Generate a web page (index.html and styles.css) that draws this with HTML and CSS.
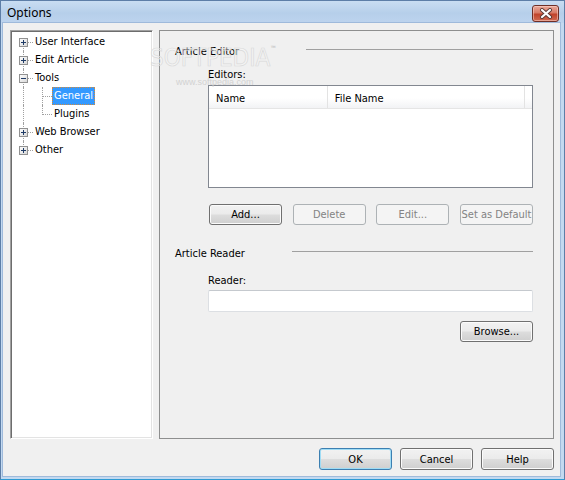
FILE: index.html
```html
<!DOCTYPE html>
<html>
<head>
<meta charset="utf-8">
<title>Options</title>
<link rel="stylesheet" href="styles.css">
</head>
<body>
<div class="window">
  <div class="titlebar">
    <span class="title">Options</span>
    <div class="close">
      <svg width="14" height="11" viewBox="0 0 14 11">
        <path d="M3 2 L11 9 M11 2 L3 9" stroke="#5a3a36" stroke-width="4" stroke-linecap="round"/>
        <path d="M3 2 L11 9 M11 2 L3 9" stroke="#ffffff" stroke-width="2.2" stroke-linecap="round"/>
      </svg>
    </div>
  </div>
  <div class="client">
    <div class="panes">
      <div class="tree">
        <div class="row">
          <span class="g first"><svg class="exp" width="9" height="9" viewBox="0 0 9 9"><defs><linearGradient id="bx" x1="0" y1="0" x2="1" y2="1"><stop offset="0" stop-color="#ffffff"/><stop offset="1" stop-color="#d6d6d6"/></linearGradient></defs><rect x="0.5" y="0.5" width="8" height="8" fill="url(#bx)" stroke="#919191"/><path d="M2 4.5H7M4.5 2V7" stroke="#1f3b66"/></svg></span>
          <span class="lbl">User Interface</span>
        </div>
        <div class="row">
          <span class="g"><svg class="exp" width="9" height="9" viewBox="0 0 9 9"><rect x="0.5" y="0.5" width="8" height="8" fill="url(#bx)" stroke="#919191"/><path d="M2 4.5H7M4.5 2V7" stroke="#1f3b66"/></svg></span>
          <span class="lbl">Edit Article</span>
        </div>
        <div class="row">
          <span class="g"><svg class="exp" width="9" height="9" viewBox="0 0 9 9"><rect x="0.5" y="0.5" width="8" height="8" fill="url(#bx)" stroke="#919191"/><path d="M2 4.5H7" stroke="#1f3b66"/></svg></span>
          <span class="lbl">Tools</span>
        </div>
        <div class="row">
          <span class="g pass"></span>
          <span class="g"></span>
          <span class="lbl sel">General</span>
        </div>
        <div class="row">
          <span class="g pass"></span>
          <span class="g last"></span>
          <span class="lbl">Plugins</span>
        </div>
        <div class="row">
          <span class="g"><svg class="exp" width="9" height="9" viewBox="0 0 9 9"><rect x="0.5" y="0.5" width="8" height="8" fill="url(#bx)" stroke="#919191"/><path d="M2 4.5H7M4.5 2V7" stroke="#1f3b66"/></svg></span>
          <span class="lbl">Web Browser</span>
        </div>
        <div class="row">
          <span class="g last"><svg class="exp" width="9" height="9" viewBox="0 0 9 9"><rect x="0.5" y="0.5" width="8" height="8" fill="url(#bx)" stroke="#919191"/><path d="M2 4.5H7M4.5 2V7" stroke="#1f3b66"/></svg></span>
          <span class="lbl">Other</span>
        </div>
      </div>
      <div class="page">
        <div class="heading h1">
          <span class="hlabel w1">Article Editor</span>
          <span class="hline"></span>
        </div>
        <div class="section">
          <div class="field-label editors">Editors:</div>
          <div class="listbox">
            <div class="lhead">
              <span class="col c1">Name</span>
              <span class="col c2">File Name</span>
              <span class="col c3"></span>
            </div>
          </div>
          <div class="btnrow">
            <button class="btn">Add...</button>
            <button class="btn" disabled>Delete</button>
            <button class="btn" disabled>Edit...</button>
            <button class="btn" disabled>Set as Default</button>
          </div>
        </div>
        <div class="heading h2">
          <span class="hlabel w2">Article Reader</span>
          <span class="hline"></span>
        </div>
        <div class="section">
          <div class="field-label reader">Reader:</div>
          <div class="textbox"></div>
          <div class="browse-row">
            <button class="btn">Browse...</button>
          </div>
        </div>
      </div>
    </div>
    <div class="footer">
      <button class="btn fbtn default">OK</button>
      <button class="btn fbtn">Cancel</button>
      <button class="btn fbtn">Help</button>
    </div>
  </div>
  <div class="wm">SOFTPEDIA<span class="tm">™</span></div>
  <div class="wm-url">www.softpedia.com</div>
</div>
</body>
</html>
```

FILE: styles.css
```css
html, body {
  margin: 0;
  padding: 0;
}

body {
  font-family: "DejaVu Sans Condensed", "DejaVu Sans", sans-serif;
  font-size: 11px;
  color: #000;
  background: #bfd5ee;
}

.window {
  position: relative;
  width: 565px;
  height: 480px;
  box-sizing: border-box;
  display: flex;
  flex-direction: column;
  background: #c3d9f0;
  border: 1px solid #5d7ea7;
  border-bottom-color: #2f9bd3;
  overflow: hidden;
}

.titlebar {
  height: 22px;
  flex: none;
  display: flex;
  align-items: center;
  justify-content: space-between;
  padding-left: 6px;
  padding-right: 5px;
  background: linear-gradient(to bottom, #c9ddf2 0%, #b6cfea 55%, #bdd4ee 100%);
}

.title {
  font-family: "Noto Sans", "Open Sans", sans-serif;
  font-size: 12px;
  color: #000;
  margin-top: 1px;
}

.close {
  width: 25px;
  height: 15px;
  margin-top: 2px;
  border: 1px solid #6e2f27;
  border-radius: 3px;
  display: flex;
  align-items: center;
  justify-content: center;
  background: linear-gradient(to bottom, #e9a99b 0%, #d77a66 45%, #c0432b 55%, #d06a52 100%);
  box-shadow: inset 0 0 0 1px rgba(255, 220, 210, 0.5);
}

.client {
  flex: 1;
  margin: 0 4px 3px 2px;
  background: #f0f0f0;
  box-shadow: 0 0 0 1px #9fbadb;
  padding: 7px 5px 0 7px;
  display: flex;
  flex-direction: column;
}

.panes {
  display: flex;
  gap: 6px;
  height: 409px;
}

.tree {
  width: 143px;
  box-sizing: border-box;
  background: #fff;
  border: 1px solid;
  border-color: #a0a0a0 #ffffff #ffffff #a0a0a0;
  box-shadow: inset 1px 1px 0 #6d6d6d, inset -1px -1px 0 #e3e3e3;
  padding: 2px 0 0 3px;
}

.row {
  display: flex;
  height: 18px;
  align-items: stretch;
}

.g {
  position: relative;
  width: 19px;
  flex: none;
}

.g::before {
  content: "";
  position: absolute;
  left: 9px;
  top: 0;
  bottom: 0;
  border-left: 1px dotted #a0a0a0;
}

.g::after {
  content: "";
  position: absolute;
  left: 9px;
  top: 9px;
  width: 10px;
  border-top: 1px dotted #a0a0a0;
}

.g.first::before {
  top: 9px;
}

.g.last::before {
  bottom: 8px;
}

.g.pass::after {
  display: none;
}

.exp {
  position: absolute;
  left: 5px;
  top: 5px;
  z-index: 1;
  display: block;
}

.lbl {
  padding: 0 2px;
  line-height: 18px;
  white-space: nowrap;
}

.lbl.sel {
  background: #3399ff;
  color: #fff;
  outline: 1px dotted #d28a3c;
  outline-offset: -1px;
}

.page {
  position: relative;
  width: 395px;
  box-sizing: border-box;
  border: 1px solid #8e8f8f;
  padding: 0 20px 0 15px;
}

.heading {
  display: flex;
  align-items: flex-start;
  height: 15px;
}

.h1 {
  margin-top: 12px;
}

.h2 {
  margin-top: 20px;
}

.hlabel {
  line-height: 15px;
  padding-top: 1px;
  flex: none;
}

.w1 {
  width: 131px;
}

.w2 {
  width: 117px;
}

.hline {
  flex: 1;
  margin-top: 6px;
  border-top: 1px solid #a0a0a0;
}

.section {
  margin-left: 33px;
  display: flex;
  flex-direction: column;
}

.field-label {
  line-height: 14px;
  padding-top: 1px;
}

.editors {
  margin-top: 9px;
}

.reader {
  margin-top: 13px;
}

.listbox {
  margin-top: 3px;
  height: 103px;
  box-sizing: border-box;
  border: 1px solid #828790;
  background: #fff;
}

.lhead {
  display: flex;
  height: 23px;
  box-sizing: border-box;
  border-bottom: 1px solid #e5e5e5;
  background: linear-gradient(to bottom, #ffffff 0%, #ffffff 55%, #f2f3f5 100%);
}

.col {
  box-sizing: border-box;
  padding: 3px 0 0 7px;
  line-height: 20px;
  border-right: 1px solid #e3e3e3;
}

.c1 {
  width: 121px;
}

.c2 {
  width: 201px;
}

.c3 {
  flex: 1;
  border-right: none;
}

.btnrow {
  margin-top: 16px;
  display: flex;
  justify-content: space-between;
  padding-left: 1px;
}

.btn {
  font-family: inherit;
  font-size: 11px;
  color: #000;
  width: 73px;
  height: 21px;
  padding: 0;
  border: 1px solid #707070;
  border-radius: 3px;
  background: linear-gradient(to bottom, #f2f2f2 0%, #ebebeb 48%, #dddddd 52%, #cfcfcf 100%);
  box-shadow: inset 0 0 0 1px #fbfbfb;
}

.btn:disabled {
  color: #838383;
  border-color: #adb2b5;
  background: #f4f4f4;
  box-shadow: none;
}

.textbox {
  margin-top: 2px;
  height: 22px;
  box-sizing: border-box;
  background: #fff;
  border: 1px solid #dcdfe3;
  border-top-color: #c5c9ce;
  border-radius: 2px;
}

.browse-row {
  margin-top: 9px;
  display: flex;
  justify-content: flex-end;
}

.footer {
  margin-top: 9px;
  display: flex;
  justify-content: flex-end;
  gap: 8px;
  padding-right: 1px;
}

.fbtn {
  height: 22px;
}

.fbtn.default {
  border-color: #3c7fb1;
  box-shadow: inset 0 0 0 1px #9fdcf5;
}

.wm {
  position: absolute;
  left: 149px;
  top: 44px;
  font-family: "DejaVu Sans Condensed", sans-serif;
  font-size: 24px;
  line-height: 26px;
  letter-spacing: 0;
  color: rgba(255, 255, 255, 0.3);
  -webkit-text-stroke: 0.7px #dadada;
  pointer-events: none;
}

.tm {
  font-size: 7px;
  line-height: 8px;
  vertical-align: top;
  -webkit-text-stroke: 0.3px #cccccc;
}

.wm-url {
  position: absolute;
  left: 175px;
  top: 76px;
  font-family: "Liberation Sans", sans-serif;
  font-size: 9px;
  color: #d2d2d2;
  pointer-events: none;
}
```
